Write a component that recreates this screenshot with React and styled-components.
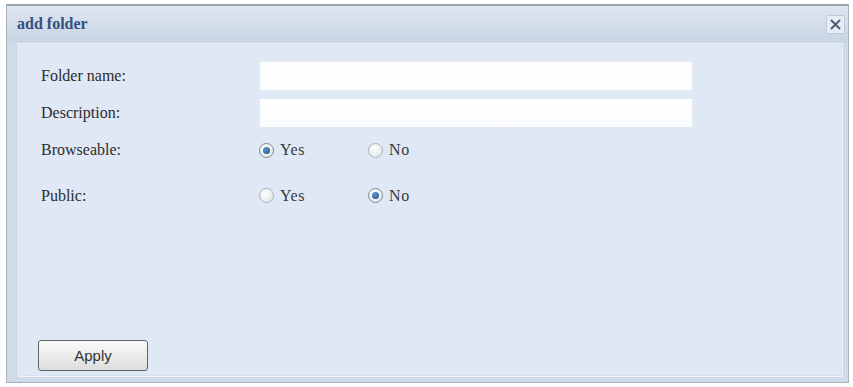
import React from "react";
import styled, { createGlobalStyle } from "styled-components";

const Global = createGlobalStyle`
  html, body { margin: 0; padding: 0; background: #ffffff; }
  body { width: 853px; height: 387px; overflow: hidden; }
`;

const Page = styled.div`
  padding: 4px 4px 4px 6px;
  box-sizing: border-box;
  width: 853px;
  height: 387px;
`;

const Window = styled.div`
  height: 379px;
  box-sizing: border-box;
  border: 1px solid #a9b1bb;
  border-top: 2px solid #9aa1a9;
  background: #cfdbe8;
  display: flex;
  flex-direction: column;
  padding: 0 5px 5px 11px;
`;

const TitleBar = styled.div`
  height: 37px;
  display: flex;
  align-items: center;
  justify-content: space-between;
  margin-left: -11px;
  margin-right: -5px;
  padding: 0 3px 0 10px;
  background: linear-gradient(#dde6f0, #c8d5e4);
`;

const Title = styled.span`
  font-family: "Liberation Serif", "DejaVu Serif", serif;
  font-weight: bold;
  font-size: 16px;
  color: #34507e;
  margin-top: -2px;
`;

const Close = styled.div`
  width: 19px;
  height: 19px;
  box-sizing: border-box;
  border: 1px solid #c2ccd8;
  background: #e6edf5;
  display: flex;
  align-items: center;
  justify-content: center;
`;

const Content = styled.div`
  flex: 1;
  background: #dfe8f4;
  border: 1px solid #eef3f9;
  box-shadow: inset 0 0 0 1px #d6e1ee;
  display: flex;
  flex-direction: column;
  justify-content: space-between;
  padding: 17px 0 5px 22px;
`;

const Form = styled.div`
  display: grid;
  grid-template-columns: 218px 434px;
  row-gap: 7px;
  align-items: center;
`;

const Label = styled.div`
  font-family: "Liberation Serif", "DejaVu Serif", serif;
  font-size: 16px;
  color: #2c2c2c;
  height: ${(p) => p.h || 30}px;
  display: flex;
  align-items: center;
`;

const Input = styled.input`
  height: 30px;
  box-sizing: border-box;
  border: 1px solid #e4eaf2;
  background: linear-gradient(#ffffff, #fbfcfe);
  outline: none;
  width: 434px;
`;

const Radios = styled.div`
  display: flex;
  height: ${(p) => p.h || 30}px;
  align-items: center;
`;

const RadioOpt = styled.label`
  width: 109px;
  display: flex;
  align-items: center;
  gap: 6px;
  font-family: "Liberation Serif", "DejaVu Serif", serif;
  font-size: 16px;
  letter-spacing: 0.6px;
  color: #3a3a3a;
`;

const Dot = styled.span`
  width: 15px;
  height: 15px;
  border-radius: 50%;
  box-sizing: border-box;
  border: 1px solid ${(p) => (p.on ? "#7b8894" : "#aab3bc")};
  background: radial-gradient(circle at 40% 35%, #ffffff, #dce2e9);
  display: flex;
  align-items: center;
  justify-content: center;
  &::after {
    content: "";
    display: ${(p) => (p.on ? "block" : "none")};
    width: 7px;
    height: 7px;
    border-radius: 50%;
    background: radial-gradient(circle at 40% 35%, #5a98cc, #1d4e7c);
  }
`;

const Button = styled.button`
  width: 110px;
  height: 31px;
  box-sizing: border-box;
  border: 1px solid #5f6468;
  border-radius: 3px;
  background: linear-gradient(#fbfbfb, #e9e9ea 60%, #dcdcde);
  font-family: "Liberation Sans", Arial, sans-serif;
  font-size: 15px;
  color: #333;
  margin-left: -3px;
`;

function Radio({ on, children }) {
  return (
    <RadioOpt>
      <Dot on={on ? 1 : 0} />
      {children}
    </RadioOpt>
  );
}

export default function App() {
  return (
    <>
      <Global />
      <Page>
        <Window>
          <TitleBar>
            <Title>add folder</Title>
            <Close>
              <svg width="11" height="11" viewBox="0 0 11 11">
                <path d="M1.5 1.5 L9.5 9.5 M9.5 1.5 L1.5 9.5" stroke="#4d5f78" strokeWidth="2" strokeLinecap="round" />
              </svg>
            </Close>
          </TitleBar>
          <Content>
            <Form>
              <Label>Folder name:</Label>
              <Input />
              <Label>Description:</Label>
              <Input />
              <Label h={30}>Browseable:</Label>
              <Radios h={30}>
                <Radio on>Yes</Radio>
                <Radio>No</Radio>
              </Radios>
              <Label h={47}>Public:</Label>
              <Radios h={47}>
                <Radio>Yes</Radio>
                <Radio on>No</Radio>
              </Radios>
            </Form>
            <Button>Apply</Button>
          </Content>
        </Window>
      </Page>
    </>
  );
}
